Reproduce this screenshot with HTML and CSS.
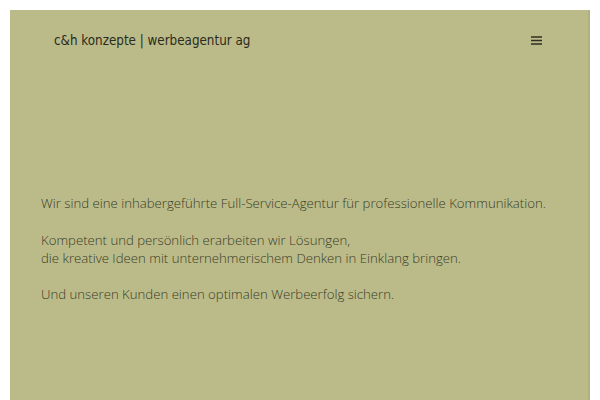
FILE: index.html
```html
<!DOCTYPE html>
<html lang="de">
<head>
<meta charset="utf-8">
<title>c&amp;h konzepte | werbeagentur ag</title>
<link rel="stylesheet" href="styles.css">
</head>
<body>
<div class="frame">
  <header class="header">
    <div class="logo">c&amp;h konzepte | werbeagentur ag</div>
    <button class="menu" aria-label="Menü">
      <svg width="11" height="9" viewBox="0 0 11 9"><path d="M0 1h11M0 4.5h11M0 8h11" stroke="#2f3020" stroke-width="1.3"/></svg>
    </button>
  </header>
  <main class="content">
    <p>Wir sind eine inhabergeführte Full-Service-Agentur für professionelle Kommunikation.</p>
    <p>Kompetent und persönlich erarbeiten wir Lösungen,<br>die kreative Ideen mit unternehmerischem Denken in Einklang bringen.</p>
    <p>Und unseren Kunden einen optimalen Werbeerfolg sichern.</p>
  </main>
</div>
</body>
</html>
```
FILE: styles.css
```css
html, body { margin: 0; padding: 0; background: #ffffff; }
body { padding: 10px 10px 0 10px; overflow: hidden; height: 400px; box-sizing: border-box; }
.frame {
  background: #bbbb8a;
  height: 400px;
  border-right: 2px solid #b0b080;
  box-sizing: border-box;
}
.header {
  display: flex;
  justify-content: space-between;
  align-items: center;
  padding: 19px 46px 0 44px;
  height: 22px;
}
.logo {
  font-family: "DejaVu Sans Condensed", "DejaVu Sans", sans-serif;
  font-size: 13.3px;
  color: #2a2b1c;
}
.menu {
  background: none; border: 0; padding: 0; margin: 0;
  display: flex; width: 11px; height: 9px;
}
.content {
  padding: 143px 0 0 31px;
  font-family: "Open Sans", sans-serif;
  font-weight: 300;
  font-size: 13.2px;
  line-height: 18.3px;
  color: #3a3c26;
}
.content p { margin: 0 0 18.3px 0; white-space: nowrap; }
```
